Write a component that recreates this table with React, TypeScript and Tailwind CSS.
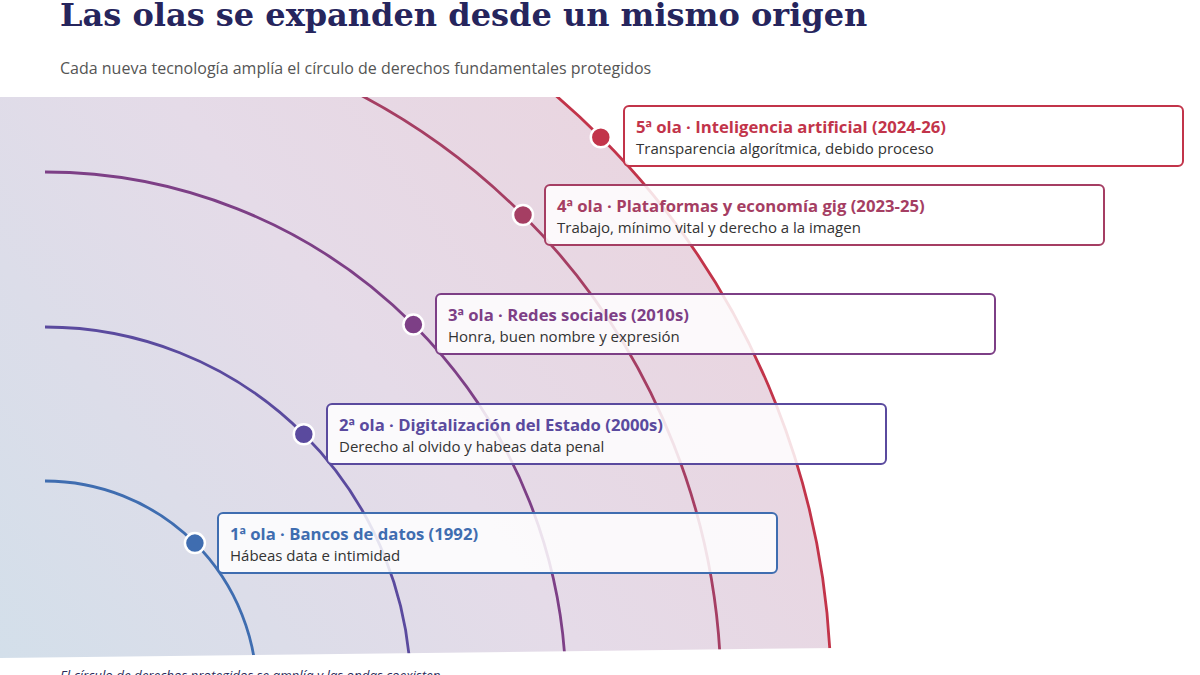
import React from "react";

type Wave = {
  r: number;
  color: string;
  title: string;
  text: string;
  left: number;
  top: number;
};

const CX = 45;
const CY = 693;

const waves: Wave[] = [
  { r: 212, color: "#3f6db0", title: "1ª ola · Bancos de datos (1992)", text: "Hábeas data e intimidad", left: 217, top: 512 },
  { r: 366, color: "#5a4a9e", title: "2ª ola · Digitalización del Estado (2000s)", text: "Derecho al olvido y habeas data penal", left: 326, top: 403 },
  { r: 521, color: "#7d3f86", title: "3ª ola · Redes sociales (2010s)", text: "Honra, buen nombre y expresión", left: 435, top: 293 },
  { r: 676, color: "#a53e63", title: "4ª ola · Plataformas y economía gig (2023-25)", text: "Trabajo, mínimo vital y derecho a la imagen", left: 544, top: 184 },
  { r: 786, color: "#c2344a", title: "5ª ola · Inteligencia artificial (2024-26)", text: "Transparencia algorítmica, debido proceso", left: 623, top: 105 },
];

const titleColor: Record<number, string> = {
  0: "text-[#3f6db0] border-[#3f6db0]",
  1: "text-[#5a4a9e] border-[#5a4a9e]",
  2: "text-[#7d3f86] border-[#7d3f86]",
  3: "text-[#a53e63] border-[#a53e63]",
  4: "text-[#c2344a] border-[#c2344a]",
};

const Ripples = () => {
  const d = Math.SQRT1_2;
  return (
    <svg
      className="absolute inset-0"
      width={1200}
      height={572}
      viewBox="0 90 1200 572"
    >
      <defs>
        <linearGradient id="bg" gradientUnits="userSpaceOnUse" x1="0" y1="658" x2="760" y2="97">
          <stop offset="0" stopColor="#d3dfea" />
          <stop offset="0.5" stopColor="#e5dbe8" />
          <stop offset="1" stopColor="#ebd3dd" />
        </linearGradient>
        <clipPath id="area">
          <polygon points="0,97 1200,97 1200,648 835,648 0,658" />
        </clipPath>
      </defs>
      <g clipPath="url(#area)">
        <circle cx={CX} cy={CY} r={786} fill="url(#bg)" />
        {waves.map((w) => (
          <path
            key={w.r}
            d={`M ${CX} ${CY - w.r} A ${w.r} ${w.r} 0 0 1 ${CX + w.r} ${CY}`}
            fill="none"
            stroke={w.color}
            strokeWidth={2.8}
          />
        ))}
      </g>
      {waves.map((w) => (
        <circle
          key={`dot-${w.r}`}
          cx={CX + w.r * d}
          cy={CY - w.r * d}
          r={10}
          fill={w.color}
          stroke="#ffffff"
          strokeWidth={2.5}
        />
      ))}
    </svg>
  );
};

export default function App() {
  return (
    <div className="w-[1200px] h-[675px] overflow-hidden bg-white font-['Open_Sans','Lato',sans-serif]">
      <h1 className="pl-[60px] h-[30px] leading-[30px] text-[32px] font-bold text-[#26255d] font-['DejaVu_Serif',serif]">
        Las olas se expanden desde un mismo origen
      </h1>
      <p className="mt-[28px] pl-[60px] text-[16px] leading-[20px] text-[#555555]">
        Cada nueva tecnología amplía el círculo de derechos fundamentales protegidos
      </p>
      <div className="relative mt-3 h-[572px]">
        <Ripples />
        {waves.map((w, i) => (
          <div
            key={w.title}
            className={`absolute w-[561px] h-[62px] rounded-md border-2 bg-white/85 pl-[11px] pt-[9px] ${titleColor[i]}`}
            style={{ left: w.left, top: w.top - 90 }}
          >
            <p className="text-[16.7px] leading-[22px] font-bold">{w.title}</p>
            <p className="text-[15px] leading-[20px] text-[#333333]">{w.text}</p>
          </div>
        ))}
      </div>
      <p className="mt-[3px] pl-[60px] text-[13.3px] leading-[20px] italic text-[#2a2a5a]">
        El círculo de derechos protegidos se amplía y las ondas coexisten
      </p>
    </div>
  );
}
